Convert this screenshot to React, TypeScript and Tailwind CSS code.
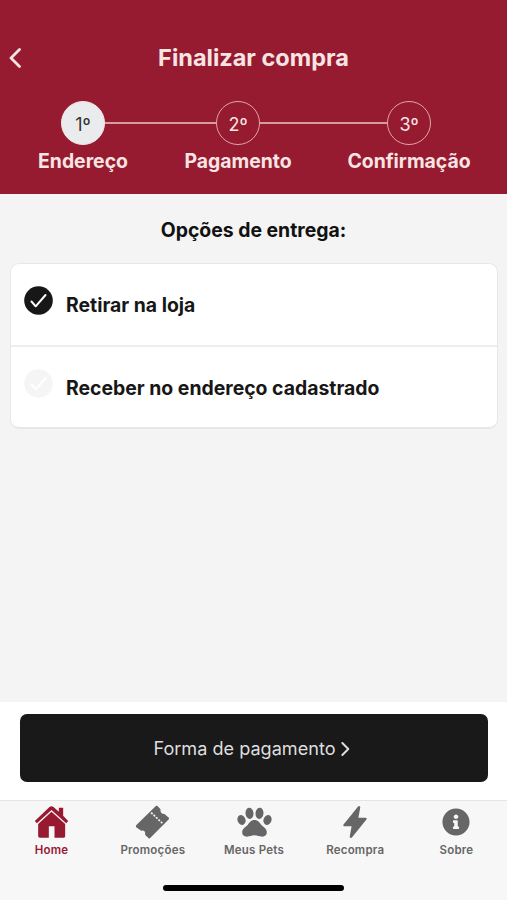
import type { ReactNode } from "react";
import { FaInfoCircle } from "react-icons/fa";
import { IoFlash } from "react-icons/io5";

const steps = [
	{ number: "1º", label: "Endereço", active: true, line: "", width: "w-[90px]" },
	{ number: "2º", label: "Pagamento", active: false, line: "w-[111px]", width: "w-[108px]" },
	{ number: "3º", label: "Confirmação", active: false, line: "w-[127px]", width: "w-[122px]" },
];

const options = [
	{ label: "Retirar na loja", selected: true },
	{ label: "Receber no endereço cadastrado", selected: false },
];

function HomeIcon() {
	return (
		<svg viewBox="0 0 104 102" className="h-[34px] w-[35px]" fill="currentColor">
			<path d="M74 20V8h13v24l15 16-6 7-44-40L8 55l-6-7L46 6q6-5 12 0z" />
			<path d="M12 57 52 20l41 37v37q0 4-4 4H61V64H44v34H17q-5 0-5-5z" />
		</svg>
	);
}

function TicketIcon() {
	return (
		<svg viewBox="0 0 104 102" className="h-[34px] w-[35px]" fill="currentColor">
			<path d="M62 3q3-2 5 0l9 10q-2 14 12 14l13 11q2 2 0 5l-56 56q-3 3-5 0l-10-9q2-15-12-13L3 67q-2-3 0-6z" />
			<path d="m48 23 36 34" stroke="#f7f7f7" strokeWidth="5" strokeDasharray="6 4" fill="none" />
		</svg>
	);
}

function PawIcon() {
	return (
		<svg viewBox="0 0 104 102" className="h-[34px] w-[35px]" fill="currentColor">
			<ellipse cx="37" cy="25" rx="12" ry="17" transform="rotate(-6 37 25)" />
			<ellipse cx="67" cy="25" rx="12" ry="17" transform="rotate(6 67 25)" />
			<ellipse cx="13" cy="45" rx="12" ry="15" transform="rotate(-20 13 45)" />
			<ellipse cx="91" cy="45" rx="12" ry="15" transform="rotate(20 91 45)" />
			<path d="M52 45c-10 0-15 7-20 14-5 6-17 11-17 23 0 9 6 13 14 13 9 0 14-4 23-4s14 4 23 4c8 0 14-4 14-13 0-12-12-17-17-23-5-7-10-14-20-14z" />
		</svg>
	);
}

function Chevron({ className }: { className: string }) {
	return (
		<svg viewBox="0 0 12 20" className={className} fill="none" stroke="currentColor">
			<path d="m1.5 1.5 8.5 8.5-8.5 8.5" strokeWidth="2.8" strokeLinecap="round" strokeLinejoin="round" />
		</svg>
	);
}

function CheckMark({ selected }: { selected: boolean }) {
	return (
		<svg viewBox="0 0 29 29" className="h-[29px] w-[29px] shrink-0">
			<circle cx="14.5" cy="14.5" r="14.3" className={selected ? "fill-[#171717]" : "fill-[#f5f5f5]"} />
			<path d="m7.5 15.5 4.2 4.8L21.5 9" fill="none" stroke="#fff" strokeWidth="2" strokeLinecap="round" strokeLinejoin="round" />
		</svg>
	);
}

interface TabProps {
	label: string;
	icon: ReactNode;
	active?: boolean;
}

function Tab({ label, icon, active }: TabProps) {
	return (
		<div className={`flex flex-1 flex-col items-center ${active ? "text-[#981a31]" : "text-[#666]"}`}>
			<div className="flex h-[42px] items-center justify-center">{icon}</div>
			<span className="text-[11.5px] leading-[14px] font-semibold whitespace-nowrap tracking-[0.2px]">{label}</span>
		</div>
	);
}

export default function App() {
	return (
		<div className="flex h-[900px] w-[507px] flex-col overflow-hidden bg-[#f4f4f4] font-['Inter',sans-serif]">
			<header className="h-[194px] shrink-0 bg-[#961a30] pt-10 text-[#f8e5e3]">
				<div className="grid h-[34px] grid-cols-[1fr_auto_1fr] items-center">
					<Chevron className="ml-[9px] h-5 w-3 rotate-180" />
					<h1 className="text-[23.5px] font-bold whitespace-nowrap">Finalizar compra</h1>
				</div>
				<div className="mt-[27px] flex h-11 items-center pl-[61px]">
					{steps.map((step) => (
						<div key={step.label} className="flex items-center">
							{step.line && <div className={`h-[1.5px] bg-[#d99ba2] ${step.line}`} />}
							<div
								className={`flex size-11 items-center justify-center rounded-full border-[1.5px] pt-1 text-lg ${
									step.active ? "border-[#f3e5e5] bg-[#e9ebec] text-[#333]" : "border-[#dfa6ab]"
								}`}
							>
								{step.number}
							</div>
						</div>
					))}
				</div>
				<div className="mt-[3px] flex pl-[38px] text-[19.4px] leading-[26px] font-bold">
					{steps.map((step, i) => (
						<div key={step.label} className={`${step.width} ${i > 0 ? "ml-14" : ""} flex justify-center whitespace-nowrap`}>
							{step.label}
						</div>
					))}
				</div>
			</header>
			<main className="flex-1 px-2.5 pt-[22px]">
				<h2 className="text-center text-[19.4px] leading-7 font-bold text-[#111]">Opções de entrega:</h2>
				<div className="mt-[19px] -mr-px h-[166px] divide-y-2 divide-[#eee] rounded-[9px] border border-b-2 border-[#e7e7e7] bg-white">
					{options.map((option) => (
						<div key={option.label} className="flex h-[82.5px] items-center gap-[13px] pl-[13px]">
							<div className="-mt-2">
								<CheckMark selected={option.selected} />
							</div>
							<span className="pt-0.5 text-[19.4px] font-bold text-[#171717]">{option.label}</span>
						</div>
					))}
				</div>
			</main>
			<div className="h-[98px] shrink-0 bg-white pt-3 pr-[19px] pl-5">
				<button className="flex h-[68px] w-full items-center justify-center gap-[5px] rounded-[7px] bg-[#191919] pr-[5px] pt-0.5 text-[18.1px] text-[#dedede]">
					Forma de pagamento
					<Chevron className="h-[14px] w-[9px]" />
				</button>
			</div>
			<nav className="flex h-[100px] shrink-0 flex-col items-center border-t border-[#e4e4e4] bg-[#f7f7f7]">
				<div className="flex h-[84px] w-full pl-px">
					<Tab label="Home" icon={<HomeIcon />} active />
					<Tab label="Promoções" icon={<TicketIcon />} />
					<Tab label="Meus Pets" icon={<PawIcon />} />
					<Tab label="Recompra" icon={<IoFlash className="size-[34px]" />} />
					<Tab label="Sobre" icon={<FaInfoCircle className="size-7" />} />
				</div>
				<div className="h-[6px] w-[181px] rounded-full bg-black" />
			</nav>
		</div>
	);
}
